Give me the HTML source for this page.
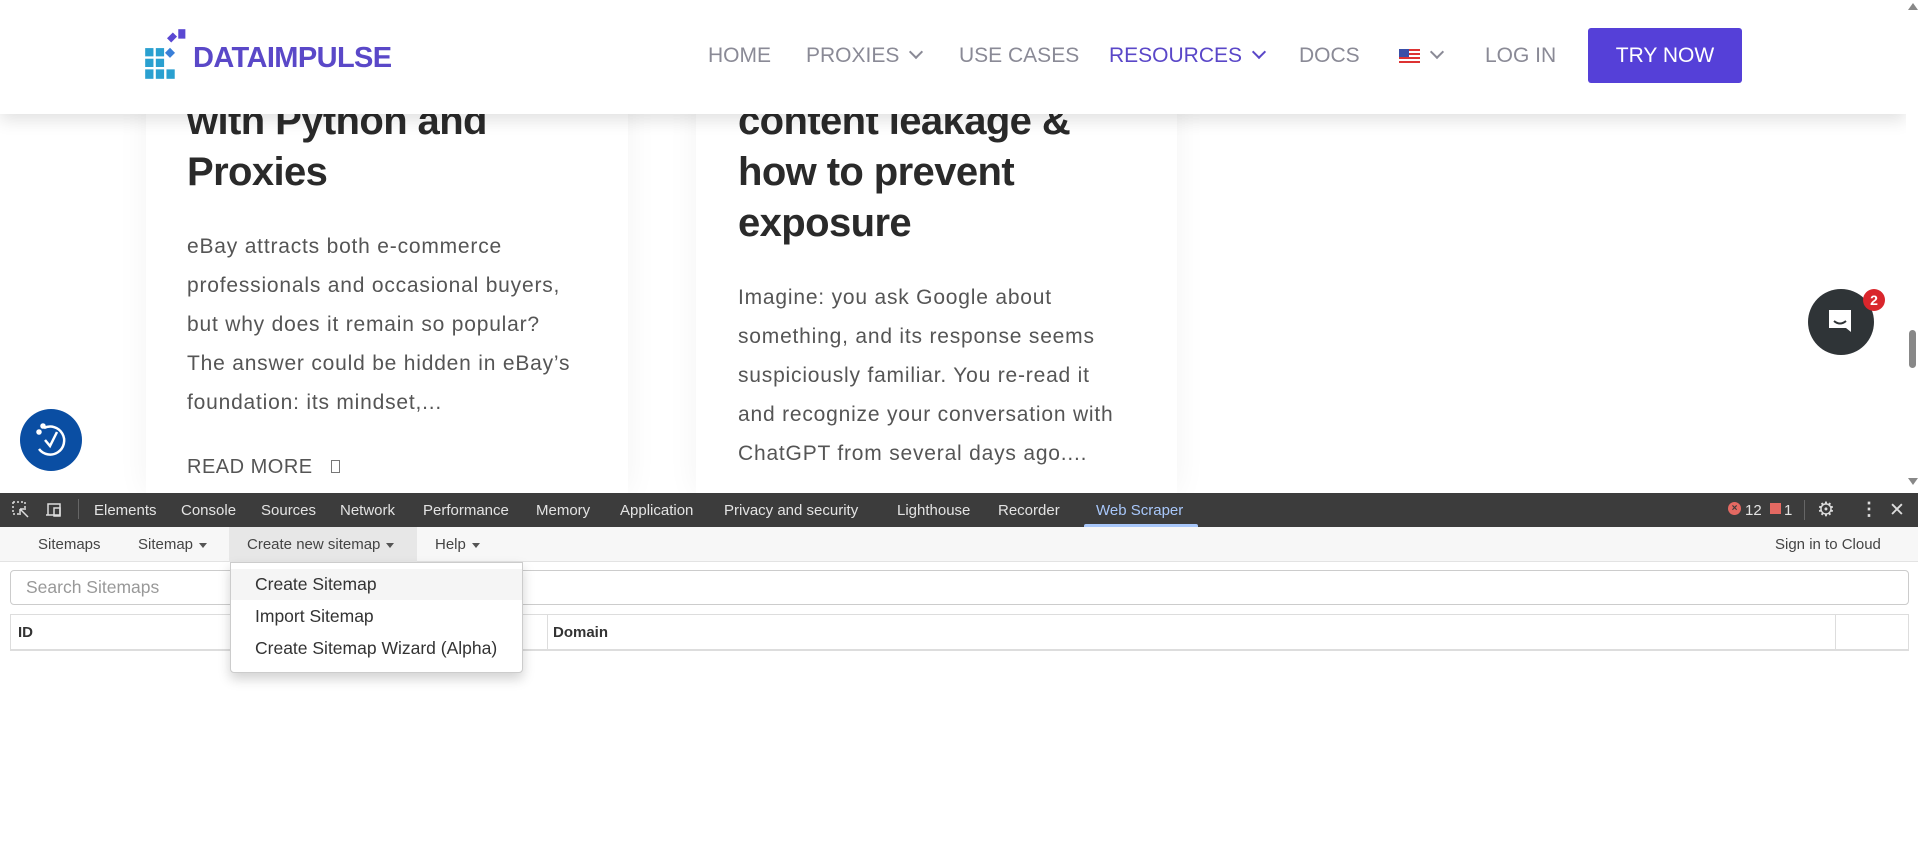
<!DOCTYPE html>
<html><head><meta charset="utf-8"><style>
*{margin:0;padding:0;box-sizing:border-box}
body{width:1918px;height:862px;overflow:hidden;background:#fff;font-family:"Liberation Sans",sans-serif;position:relative}
.a{position:absolute;white-space:nowrap}
.card{position:absolute;background:#fff;box-shadow:0 0 30px rgba(0,0,0,.05);top:0;height:493px}
.h{position:absolute;font-size:40px;font-weight:bold;color:#2a2a2a;letter-spacing:-0.6px}
.p{position:absolute;font-size:21px;color:#555;line-height:39px;white-space:nowrap;letter-spacing:0.8px}
.nav{position:absolute;top:44px;font-size:21px;color:#8a8a96;white-space:nowrap}
.chev{display:inline-block;width:10px;height:10px;border-right:2px solid currentColor;border-bottom:2px solid currentColor;transform:rotate(45deg);margin-left:12px;position:relative;top:-5px}
.dt{position:absolute;top:502px;font-size:15px;color:#e3e3e3}
.tb{position:absolute;top:536px;font-size:15px;color:#444}
.car{display:inline-block;border-left:4px solid transparent;border-right:4px solid transparent;border-top:5px solid #555;margin-left:6px;vertical-align:middle}
</style></head><body>
<div class="card" style="left:146px;width:482px"></div>
<div class="card" style="left:696px;width:481px"></div>
<div class="h" style="left:187px;top:99px">with Python and</div>
<div class="h" style="left:187px;top:150px">Proxies</div>
<div class="h" style="left:738px;top:99px">content leakage &amp;</div>
<div class="h" style="left:738px;top:150px">how to prevent</div>
<div class="h" style="left:738px;top:201px">exposure</div>
<div class="p" style="left:187px;top:227px">eBay attracts both e-commerce<br>professionals and occasional buyers,<br>but why does it remain so popular?<br>The answer could be hidden in eBay’s<br>foundation: its mindset,...</div>
<div class="a" style="left:187px;top:456px;font-size:20px;color:#555;letter-spacing:0.5px">READ MORE <span style="display:inline-block;width:9px;height:13px;border:1px solid #777;margin-left:12px"></span></div>
<div class="p" style="left:738px;top:278px">Imagine: you ask Google about<br>something, and its response seems<br>suspiciously familiar. You re-read it<br>and recognize your conversation with<br>ChatGPT from several days ago....</div>
<div class="a" style="left:0;top:0;width:1906px;height:114px;background:#fff;box-shadow:0 6px 16px rgba(0,0,0,.12)"></div>
<svg class="a" style="left:145px;top:28px" width="50" height="52" viewBox="0 0 42 44">
<rect x="0" y="17" width="7" height="7" fill="#2aa0d0"/><rect x="0" y="26" width="7" height="7" fill="#2aa0d0"/><rect x="9" y="26" width="7" height="7" fill="#2aa0d0"/><rect x="0" y="35" width="7" height="8" fill="#2aa0d0"/><rect x="9" y="35" width="7" height="8" fill="#2aa0d0"/><rect x="18" y="35" width="7" height="8" fill="#2aa0d0"/><rect x="9" y="17" width="7" height="7" fill="#2aa0d0"/>
<rect x="20" y="4" width="5" height="7" fill="#5a48d2" transform="rotate(45 22 8)"/><rect x="28" y="1" width="6" height="8" fill="#5a48d2"/><rect x="18" y="18" width="6" height="6" fill="#3a7fd8" transform="rotate(45 21 21)"/></svg>
<div class="a" style="left:193px;top:42px;font-size:29px;font-weight:bold;color:#5a48c8;letter-spacing:-0.6px">DATAIMPULSE</div>
<div class="nav" style="left:708px">HOME</div>
<div class="nav" style="left:806px">PROXIES<span class="chev"></span></div>
<div class="nav" style="left:959px">USE CASES</div>
<div class="nav" style="left:1109px;color:#5a47c8">RESOURCES<span class="chev"></span></div>
<div class="nav" style="left:1299px">DOCS</div>
<div class="a" style="left:1399px;top:49px;width:21px;height:15px;background:repeating-linear-gradient(#d33 0 2px,#fff 2px 4px)"><div style="width:10px;height:8px;background:#3a4fa8"></div></div>
<div class="nav" style="left:1420px"><span class="chev"></span></div>
<div class="nav" style="left:1485px">LOG IN</div>
<div class="a" style="left:1588px;top:28px;width:154px;height:55px;background:#5540d8;border-radius:3px;color:#fff;font-size:21px;text-align:center;line-height:55px">TRY NOW</div>
<div class="a" style="left:1906px;top:0;width:12px;height:493px;background:#fff"></div>
<div class="a" style="left:1908px;top:3px;border-left:5px solid transparent;border-right:5px solid transparent;border-bottom:7px solid #888"></div>
<div class="a" style="left:1909px;top:330px;width:7px;height:38px;background:#888;border-radius:4px"></div>
<div class="a" style="left:1908px;top:478px;border-left:5px solid transparent;border-right:5px solid transparent;border-top:7px solid #888"></div>
<div class="a" style="left:20px;top:409px;width:62px;height:62px;border-radius:50%;background:#0a4ea3"></div>
<svg class="a" style="left:30px;top:419px" width="42" height="42" viewBox="0 0 42 42" fill="none" stroke="#fff" stroke-width="2.5"><path d="M14 9 A14 14 0 1 1 9 30"/><path d="M15 21 L20 27 L27 13"/><circle cx="9" cy="13" r="1.5" fill="#fff"/><circle cx="13" cy="7" r="1.5" fill="#fff"/></svg>
<div class="a" style="left:1808px;top:289px;width:66px;height:66px;border-radius:50%;background:#2f3437"></div>
<svg class="a" style="left:1825px;top:306px" width="32" height="32" viewBox="0 0 32 32"><path d="M4 4h22v22l-5-4H4z" fill="#fff"/><path d="M9 15q6 5 12 0" stroke="#2f3437" stroke-width="2" fill="none"/></svg>
<div class="a" style="left:1863px;top:289px;width:22px;height:22px;border-radius:50%;background:#d9262c;color:#fff;font-size:14px;font-weight:bold;text-align:center;line-height:22px">2</div>
<div class="a" style="left:0;top:493px;width:1918px;height:34px;background:#3c3c3c"></div>
<svg class="a" style="left:12px;top:501px" width="60" height="18" fill="none" stroke="#ddd" stroke-width="1.5"><path d="M1 1h12v6M1 1v12h6" stroke-dasharray="2 2"/><path d="M8 8l8 8M8 8v6M8 8h6"/><path d="M36 3h12v11H36zM34 14h4"/><path d="M42 7h6v8h-6z"/></svg>
<div class="a" style="left:78px;top:499px;width:1px;height:20px;background:#666"></div>
<div class="dt" style="left:94px">Elements</div><div class="dt" style="left:181px">Console</div><div class="dt" style="left:261px">Sources</div><div class="dt" style="left:340px">Network</div><div class="dt" style="left:423px">Performance</div><div class="dt" style="left:536px">Memory</div><div class="dt" style="left:620px">Application</div><div class="dt" style="left:724px">Privacy and security</div><div class="dt" style="left:897px">Lighthouse</div><div class="dt" style="left:998px">Recorder</div>
<div class="dt" style="left:1096px;color:#a8c7fa">Web Scraper</div>
<div class="a" style="left:1084px;top:524px;width:114px;height:3px;background:#a8c7fa;border-radius:2px 2px 0 0"></div>
<div class="a" style="left:1728px;top:502px;width:13px;height:13px;border-radius:50%;background:#e46962;color:#3c3c3c;font-size:10px;text-align:center;line-height:13px;font-weight:bold">×</div>
<div class="dt" style="left:1745px">12</div>
<div class="a" style="left:1770px;top:503px;width:11px;height:11px;background:#e46962"></div>
<div class="dt" style="left:1784px">1</div>
<div class="a" style="left:1804px;top:500px;width:1px;height:20px;background:#666"></div>
<div class="a" style="left:1817px;top:497px;font-size:20px;color:#ddd">⚙</div>
<div class="a" style="left:1860px;top:499px;font-size:18px;color:#ddd;font-weight:bold">⋮</div>
<div class="a" style="left:1889px;top:499px;font-size:19px;color:#ddd">✕</div>
<div class="a" style="left:0;top:527px;width:1918px;height:35px;background:#f7f7f7;border-bottom:1px solid #e3e3e3"></div>
<div class="a" style="left:229px;top:527px;width:188px;height:35px;background:#e7e7e7"></div>
<div class="tb" style="left:38px">Sitemaps</div>
<div class="tb" style="left:138px">Sitemap<span class="car"></span></div>
<div class="tb" style="left:247px">Create new sitemap<span class="car"></span></div>
<div class="tb" style="left:435px">Help<span class="car"></span></div>
<div class="tb" style="left:1775px">Sign in to Cloud</div>
<div class="a" style="left:10px;top:570px;width:1899px;height:35px;border:1px solid #ccc;border-radius:4px;background:#fff"></div>
<div class="a" style="left:26px;top:577px;font-size:17.5px;color:#999">Search Sitemaps</div>
<div class="a" style="left:10px;top:614px;width:1899px;height:37px;border:1px solid #ddd;border-bottom:2px solid #ddd"></div>
<div class="a" style="left:547px;top:615px;width:1px;height:34px;background:#ddd"></div>
<div class="a" style="left:1835px;top:615px;width:1px;height:34px;background:#ddd"></div>
<div class="a" style="left:18px;top:624px;font-size:15px;font-weight:bold;color:#333">ID</div>
<div class="a" style="left:553px;top:624px;font-size:15px;font-weight:bold;color:#333">Domain</div>
<div class="a" style="left:230px;top:562px;width:293px;height:111px;background:#fff;border:1px solid #ccc;border-radius:0 0 4px 4px;box-shadow:0 6px 12px rgba(0,0,0,.18)"></div>
<div class="a" style="left:231px;top:569px;width:291px;height:31px;background:#f5f5f5"></div>
<div class="a" style="left:255px;top:574px;font-size:17.5px;color:#333">Create Sitemap</div>
<div class="a" style="left:255px;top:606px;font-size:17.5px;color:#333">Import Sitemap</div>
<div class="a" style="left:255px;top:638px;font-size:17.5px;color:#333">Create Sitemap Wizard (Alpha)</div>
</body></html>
